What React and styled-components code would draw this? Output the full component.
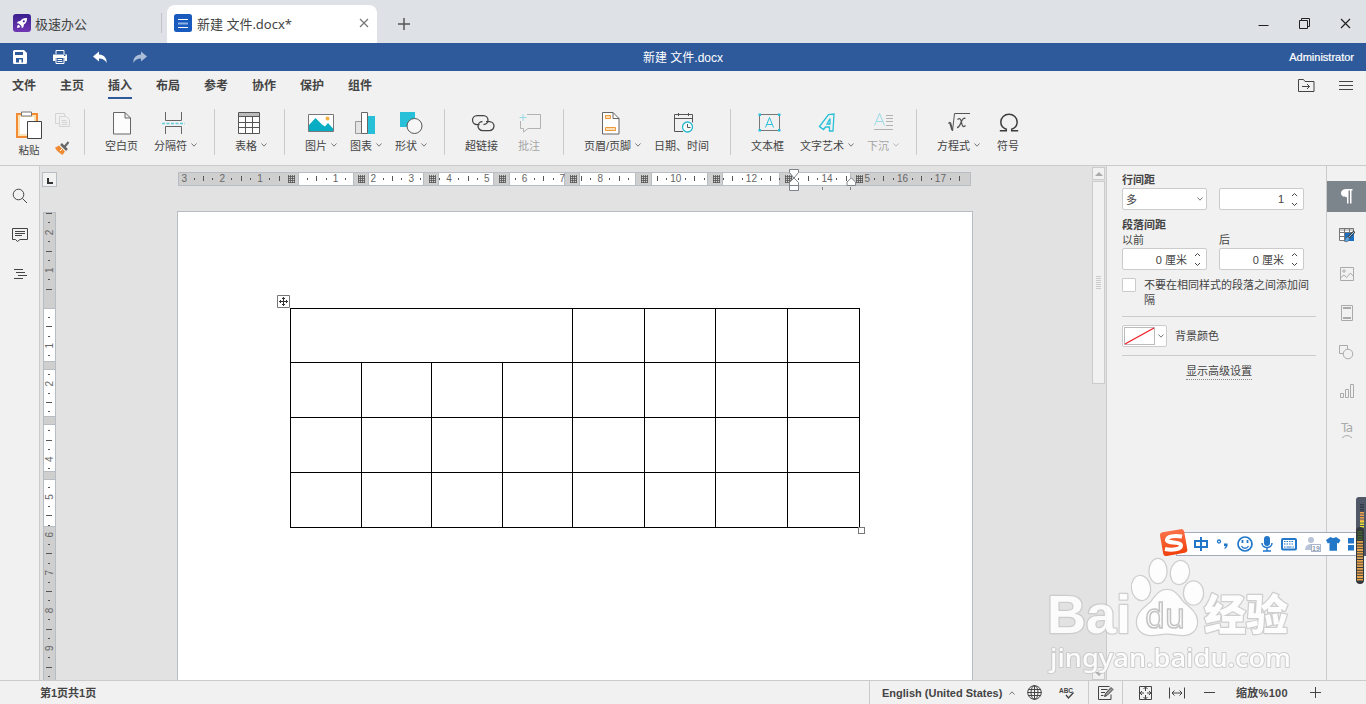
import React from "react";
import styled, {createGlobalStyle, css} from "styled-components";

const GlobalStyle = createGlobalStyle`
  * {
    box-sizing: border-box;
  }
  body {
    margin: 0;
    overflow: hidden;
    color: #444;
    font-family: "Liberation Sans", "Noto Sans CJK SC", sans-serif;
    font-size: 11px;
  }
  svg {
    display: block;
    flex: none;
  }
`;

const Window = styled.div`
  display: flex;
  flex-direction: column;
  width: 1366px;
  height: 704px;
  background: #f1f1f1;
`;

/* ---------- tabs ---------- */

const TabBar = styled.div`
  display: flex;
  height: 43px;
  background: #dee1e6;
  font-family: "Noto Sans", "Noto Sans CJK SC", sans-serif;
  font-size: 13px;
`;

const HomeTab = styled.div`
  display: flex;
  align-items: center;
  gap: 4px;
  width: 162px;
  height: 20px;
  margin: 13px 5px 0 0;
  padding-left: 13px;
  border-right: 1px solid #c0c3c8;
`;

const FileTab = styled.div`
  display: flex;
  align-items: center;
  width: 210px;
  height: 38px;
  margin-top: 5px;
  padding: 0 8px 2px 7px;
  border-radius: 8px 8px 0 0;
  background: white;
`;

const FileName = styled.span`
  flex: 1;
  padding-left: 5px;
  white-space: nowrap;
`;

const NewTab = styled.div`
  flex: 1;
  padding: 18px 0 0 21px;
`;

const WindowButtons = styled.div`
  display: flex;
  gap: 30px;
  padding: 18px 15px 0 0;
`;

/* ---------- title bar ---------- */

const TitleBar = styled.div`
  display: grid;
  grid-template-columns: 1fr auto 1fr;
  align-items: center;
  height: 28px;
  padding: 0 12px;
  background: #2e5a9c;
  color: white;
`;

const QuickActions = styled.div`
  display: flex;
  gap: 24px;
`;

const Title = styled.div`
  padding-bottom: 2px;
  font-size: 12px;
`;

const User = styled.div`
  text-align: right;
  font-size: 11px;
  -webkit-text-stroke: 0.2px white;
`;

/* ---------- menu ---------- */

const Menu = styled.div`
  display: flex;
  height: 28px;
  padding-right: 12px;
`;

const MenuItem = styled.div`
  margin: 0 12px;
  height: 28px;
  line-height: 30px;
  font-size: 12px;
  font-weight: 600;
  color: #444;
  border-bottom: 2px solid ${p => (p.$active ? "#2e5a9c" : "transparent")};
`;

const MenuIcons = styled.div`
  display: flex;
  gap: 23px;
  margin-left: auto;
  padding-top: 7px;
`;

/* ---------- toolbar ---------- */

const Toolbar = styled.div`
  display: flex;
  height: 67px;
  padding: 10px 0 0 15px;
  border-bottom: 1px solid #cbcbcb;
`;

const Tool = styled.div`
  width: ${p => p.$width}px;
  margin-left: ${p => p.$gap}px;
  opacity: ${p => (p.$disabled ? 0.45 : 1)};
`;

const ToolIcon = styled.div`
  display: flex;
  justify-content: center;
  height: 27px;
  padding: 3px ${p => p.$right || 0}px 0 ${p => p.$left || 0}px;
`;

const ToolLabel = styled.div`
  display: flex;
  align-items: center;
  gap: 4px;
  height: 18px;
  white-space: nowrap;
`;

const Divider = styled.div`
  width: 1px;
  height: 46px;
  margin-left: ${p => p.$gap}px;
  background: #cbcbcb;
`;

const Paste = styled.div`
  width: 28px;
  padding-top: 2px;
  text-align: center;
  line-height: 22px;
  font-size: 10.5px;
`;

const Clipboard = styled.div`
  display: flex;
  flex-direction: column;
  gap: 12px;
  width: 16px;
  margin-left: 12px;
  padding-top: 4px;
`;

/* ---------- workspace ---------- */

const Workspace = styled.div`
  display: flex;
  height: 514px;
`;

const LeftRail = styled.div`
  display: flex;
  flex-direction: column;
  align-items: center;
  gap: 23px;
  width: 40px;
  padding-top: 22px;
  border-right: 1px solid #cbcbcb;
`;

const Canvas = styled.div`
  display: flex;
  flex: 1;
  overflow: hidden;
  background: #e2e2e2;
`;

const RulerColumn = styled.div`
  width: 137px;
  padding: 6px 0 0 2px;
`;

const TabStop = styled.div`
  width: 15px;
  height: 15px;
  margin-bottom: 25px;
  padding: 5px 0 0 4px;
  border: 1px solid #b8bcc3;
  background: #f1f1f1;

  &::after {
    content: "";
    display: block;
    width: 4px;
    height: 4px;
    border-left: 2px solid #333;
    border-bottom: 2px solid #333;
  }
`;

const Main = styled.div`
  flex: 1;
  padding-top: 2px;
`;

const Page = styled.div`
  position: relative;
  width: 796px;
  height: 520px;
  margin-top: 19px;
  padding: 96px 0 0 112px;
  border: 1px solid #b8bcc3;
  background: white;
`;

const Table = styled.div`
  display: grid;
  grid-template-columns: 71px 70px 71px 70px 72px 71px 72px 72px;
  grid-template-rows: 54px 55px 55px 55px;
  width: 570px;
  border-top: 1px solid black;
  border-left: 1px solid black;
`;

const Cell = styled.div`
  grid-column: span ${p => p.$span || 1};
  border-right: 1px solid black;
  border-bottom: 1px solid black;
`;

const MoveHandle = styled.div`
  position: absolute;
  left: 99px;
  top: 83px;
`;

const ResizeHandle = styled.div`
  position: absolute;
  left: 680px;
  top: 315px;
  width: 7px;
  height: 7px;
  border: 1px solid #777;
  background: white;
`;

const ScrollBar = styled.div`
  display: flex;
  flex-direction: column;
  width: 14px;
  padding: 1px 1px 0 0;
`;

const ScrollButton = styled.div`
  display: flex;
  align-items: center;
  justify-content: center;
  height: 13px;
  border: 1px solid #cbcbcb;
  background: #f1f1f1;
`;

const Thumb = styled.div`
  display: flex;
  align-items: center;
  justify-content: center;
  height: 203px;
  margin: 1px 0 283px;
  border: 1px solid #cbcbcb;
  background: #f1f1f1;
`;

/* ---------- right panel ---------- */

const Panel = styled.div`
  width: 220px;
  padding: 7px 10px 0 15px;
  border-left: 1px solid #cbcbcb;
`;

const PanelLabel = styled.div`
  height: 15px;
  line-height: 15px;
  font-weight: ${p => (p.$bold ? 600 : 400)};
`;

const SpacingLabel = styled(PanelLabel)`
  margin-top: 8px;
`;

const Columns = styled.div`
  display: grid;
  grid-template-columns: 85px 85px;
  column-gap: 12px;
`;

const Field = styled.div`
  display: flex;
  align-items: center;
  justify-content: ${p => (p.$number ? "flex-end" : "space-between")};
  gap: 7px;
  height: 22px;
  padding: 0 ${p => (p.$number ? 5 : 3)}px 0 3px;
  border: 1px solid #cbcbcb;
  border-radius: 2px;
  background: white;
`;

const CheckRow = styled.div`
  display: flex;
  gap: 8px;
  width: 190px;
  height: 38px;
  margin-top: 8px;
  line-height: 15px;
`;

const CheckBox = styled.div`
  flex: none;
  width: 14px;
  height: 14px;
  border: 1px solid #cbcbcb;
  border-radius: 1px;
  background: white;
`;

const PanelLine = styled.div`
  height: 1px;
  background: #cbcbcb;
`;

const ColorRow = styled.div`
  display: flex;
  gap: 8px;
  height: 38px;
  padding-top: 8px;
  line-height: 22px;
`;

const ColorButton = styled.div`
  display: flex;
  align-items: center;
  gap: 3px;
  width: 45px;
  height: 22px;
  padding-left: 1px;
  border: 1px solid #cbcbcb;
  border-radius: 2px;
  background: white;
`;

const Advanced = styled.div`
  width: 66px;
  height: 17px;
  margin: 7px auto 0;
  line-height: 17px;
  border-bottom: 1px dotted #888;
`;

const RightRail = styled.div`
  width: 40px;
  padding-top: 15px;
  border-left: 1px solid #cbcbcb;
`;

const RailItem = styled.div`
  display: flex;
  align-items: center;
  justify-content: center;
  height: 31px;
  margin-bottom: 8px;
  padding-bottom: 1px;
  ${p =>
    p.$active &&
    css`
      background: #7d858c;
    `}
`;

/* ---------- status bar ---------- */

const StatusBar = styled.div`
  display: flex;
  align-items: center;
  height: 24px;
  border-top: 1px solid #cbcbcb;
  font-weight: bold;
`;

const PageCount = styled.div`
  width: 869px;
  padding: 0 0 2px 40px;
`;

const StatusGroup = styled.div`
  display: flex;
  align-items: center;
  height: 23px;
  width: ${p => p.$width}px;
  padding-left: ${p => p.$pad}px;
  border-left: 1px solid #cbcbcb;
`;

const Language = styled.span`
  width: 127px;
  white-space: nowrap;
`;

const Zoom = styled.span`
  width: 52px;
  padding-bottom: 2px;
  letter-spacing: 0.3px;
  white-space: nowrap;
`;

const Spacer = styled.div`
  width: ${p => p.$width}px;
`;

/* ---------- floating things ---------- */

const ImeBar = styled.div`
  position: fixed;
  left: 1176px;
  top: 532px;
  display: flex;
  align-items: center;
  width: 190px;
  height: 24px;
  border: 1px solid #a5abba;
  border-right: 0;
  background: white;
`;

const ImeLogo = styled.div`
  position: fixed;
  left: 1159px;
  top: 528px;
`;

const Meter = styled.div`
  position: fixed;
  right: 0;
  top: 497px;
`;

const Watermark = styled.div`
  position: fixed;
  left: 1040px;
  top: 550px;
  opacity: 0.85;
`;

/* ---------- icons ---------- */

const Icon = ({w, h, children, color = "#444", vb}) => (
  <svg
    width={w}
    height={h}
    viewBox={vb || `0 0 ${w} ${h}`}
    fill="none"
    stroke={color}
  >
    {children}
  </svg>
);

const Chevron = ({up}) => (
  <Icon w={6} h={4} color="#777">
    <path d={up ? "M.5 3.500 3 .8l2.500 2.700" : "M.5.5 3 3.200 5.500.5"} />
  </Icon>
);

const Spinner = () => (
  <Icon w={7} h={15}>
    <path d="M1 4 3.500 1.500 6 4M1 11l2.500 2.500L6 11" />
  </Icon>
);

const RocketLogo = () => (
  <svg width="18" height="18">
    <defs>
      <linearGradient id="rocket" x1="0" y1="0" x2="0" y2="1">
        <stop offset="0" stopColor="#3a1f8e" />
        <stop offset="1" stopColor="#7137b4" />
      </linearGradient>
    </defs>
    <rect width="18" height="18" rx="3" fill="url(#rocket)" />
    <path
      d="M14 4c-3.200-.2-5.300.9-6.700 3L5 7.400 3.800 9.300l2 .1 2.700 2.700.2 2.100 1.800-1.300.4-2.300C13 9.200 14.200 7.200 14 4zM4 14l.4-2.500 1-.8 1.900 1.900-.9 1z"
      fill="white"
    />
    <circle cx="10.800" cy="7.300" r="1.100" fill="#52299c" />
  </svg>
);

const DocLogo = () => (
  <svg width="18" height="18">
    <rect width="18" height="18" rx="2.500" fill="#185abd" />
    <path d="M4 5.500h10M4 13.500h10" stroke="white" />
    <path d="M4 9.500h10" stroke="#8eb2e4" strokeWidth="2" />
  </svg>
);

const SaveIcon = () => (
  <Icon w={16} h={16}>
    <path
      d="M2.500 1h9.500L15 4v9.500a1.500 1.500 0 0 1-1.500 1.500h-11A1.500 1.500 0 0 1 1 13.500v-11A1.500 1.500 0 0 1 2.500 1zM3 3v3h8V3zM4 9v4.500h7V9zm3 1.500h2.500v3H7z"
      fill="white"
      stroke="none"
      fillRule="evenodd"
    />
  </Icon>
);

const PrintIcon = () => (
  <Icon w={16} h={16} color="white">
    <path d="M4 5V1.500h8V5" />
    <path d="M1 5.500h14V12h-2.500V9h-9v3H1z" fill="white" stroke="none" />
    <path d="M4 8.500h8v6H4zM5.500 10.500H10M5.500 12.500h5" />
    <path d="M12 6.500h1.500" stroke="#2e5a9c" />
  </Icon>
);

const UndoIcon = ({redo}) => (
  <Icon w={16} h={16}>
    <path
      d="M1 7.500 7 2.500v3c5 .3 8 3.500 7.600 8.500C13.200 11 11 9.500 7 9.500v3z"
      fill="white"
      stroke="none"
      opacity={redo ? 0.6 : 1}
      transform={redo ? "matrix(-1 0 0 1 16 0)" : undefined}
    />
  </Icon>
);

const PasteIcon = () => (
  <svg width="28" height="28" fill="none">
    <path d="M2 3h20v23H2z" fill="#fff" stroke="#f28b33" strokeWidth="2" />
    <path d="M4 5h16v19H4z" stroke="#fbe3b5" strokeWidth="2" />
    <path d="M6.500 1h10v4h-10z" fill="#fff" stroke="#777" />
    <path d="M12.500 10.500h14v17h-14z" fill="#fff" stroke="#444" />
  </svg>
);

const CopyIcon = () => (
  <Icon w={15} h={16} color="#d4d4d4">
    <path d="M4.500 10.500H.500v-10h9v3M4.500 3.500h7l3 3v7h-10z" />
    <path d="M6.500 7.500h5M6.500 9.500h6M6.500 11.500h6" />
  </Icon>
);

const BrushIcon = () => (
  <Icon w={15} h={14}>
    <path d="M9 6.500 13.500 1" stroke="#666" strokeWidth="2" />
    <path d="m6 3 6 6" stroke="#666" strokeWidth="2.500" />
    <path d="m4 4.500 6 6L7.500 14C4 12 1 9 0 6.800z" fill="#f08a33" stroke="none" />
    <path d="m5 10 2-2" stroke="#fff" />
  </Icon>
);

const BlankIcon = () => (
  <Icon w={18} h={24} color="#666">
    <path d="M.5.5h11.500l5.500 5.500v16H.5zM12 .5V6h5.500" fill="#fcfcfc" />
  </Icon>
);

const BreakIcon = () => (
  <Icon w={24} h={24} color="#666">
    <path d="M3.500 0v8.500h16V0M3.500 22v-7.500h16V22" />
    <path d="M0 11.500h23" stroke="#5fcfdd" strokeDasharray="3 1.500" strokeWidth="1.500" />
  </Icon>
);

const TableIcon = () => (
  <Icon w={22} h={24} color="#555">
    <path d="M.5.5h21v21H.5z" fill="#fff" />
    <path d="M1 1h20v3H1z" fill="#bbb" stroke="none" />
    <path d="M.5 4.500h21M.5 10.500h21M.5 15.500h21M7.500 4v17.500M14.500 4v17.500" />
  </Icon>
);

const PictureIcon = () => (
  <Icon w={26} h={24} color="#777">
    <path d="M.5 2.500h25v17H.5z" fill="#fff" />
    <path d="M1 13 7.500 6l6.500 6.500 3 2 3-3.500 5 5.500V19H1z" fill="#08adc4" stroke="none" />
    <circle cx="19.500" cy="6.500" r="2" fill="#f6b044" stroke="none" />
  </Icon>
);

const ChartIcon = () => (
  <Icon w={21} h={24} color="#666">
    <path d="M.5 9.500h6v12h-6z" fill="#e4e4e4" stroke="#999" />
    <path d="M12 4h8v18h-8z" fill="#28c0d8" stroke="none" />
    <path d="M6.500.5h6v21h-6z" fill="#fff" />
  </Icon>
);

const ShapesIcon = () => (
  <Icon w={23} h={24} color="#555">
    <path d="M0 0h15v15H0z" fill="#28c0d8" stroke="none" />
    <circle cx="14.500" cy="14" r="7.500" fill="#f6f6f6" />
  </Icon>
);

const LinkIcon = () => (
  <Icon w={24} h={24}>
    <path
      d="M8.500 12.600H6A4.500 4.500 0 0 1 6 3.600h6.500a4.500 4.500 0 0 1 4.500 4.500c0 2.600-2 4.500-4.500 4.500"
      strokeWidth="1.300"
    />
    <path
      d="M15 9.600h3.500a4.500 4.500 0 0 1 0 9H11.500a4.500 4.500 0 0 1-4.500-4.500c0-2.600 2-4.500 4.500-4.500"
      strokeWidth="1.300"
    />
  </Icon>
);

const CommentToolIcon = () => (
  <Icon w={22} h={24} color="#666">
    <path d="M8 2.500h13.500v14H9L4.500 20v-3.500H1.500V9" />
    <path d="M4 2v7M.5 5.500h7" stroke="#28c0d8" />
  </Icon>
);

const HeaderIcon = () => (
  <Icon w={18} h={24} color="#666">
    <path d="M.5.5h10.500l6 6v15.500H.5z" fill="#fff" />
    <path d="M11 .5v6h6" />
    <path d="M3.500 3.500h5v3h-5zM3.500 15.500h10v3h-10z" fill="#fde1b6" stroke="#f0963c" />
  </Icon>
);

const DateIcon = () => (
  <Icon w={20} h={24} color="#555">
    <path d="M9 19.500H.5v-17h18v8M.5 6.500h18M4.500 1v3M14.500 1v3" />
    <circle cx="13.500" cy="15" r="5" fill="#f8fdfe" stroke="#28b8d0" strokeWidth="1.300" />
    <path d="M13.500 12v3.500h3" />
  </Icon>
);

const TextBoxIcon = () => (
  <Icon w={23} h={24} color="#777">
    <path d="M1.500 2.500h20v16h-20z" />
    <path d="m7.500 15.500 4-10 4 10M9 12.500h5" stroke="#28c0d8" />
    <path
      d="M.5 1.500h2.500v2.500H.5zM20 1.500h2.500v2.500H20zM.5 17h2.500v2.500H.5zM20 17h2.500v2.500H20z"
      fill="#28c0d8"
      stroke="none"
    />
  </Icon>
);

const WordArtIcon = () => (
  <Icon w={18} h={24} color="#28c0d8">
    <path d="M1.500 14.500 10.500 2.500 16 2l-1 17h-3.500v-4H7.500l-2 2.500zM12 6.500l-3 5.500h3z" strokeWidth="1.300" />
  </Icon>
);

const DropCapIcon = () => (
  <Icon w={20} h={24} color="#666">
    <path d="m.5 13.500 5-12 5 12M2.500 9.500h6" stroke="#28c0d8" />
    <path d="M12 3.500h7M12 6.500h7M12 9.500h7M12 13.500h7M0 17.500h19" />
  </Icon>
);

const FormulaIcon = () => (
  <Icon w={22} h={24} color="#555">
    <path d="M0 11.500 2 10l2.500 9L6.500 1.500H22" />
    <path d="M2 10.500 4.300 18" strokeWidth="2" />
    <path
      d="M9.500 7.500c2.500-2 3.500 0 4 3s1.500 5.500 4 3M17.500 6.500c-2-1-3 .8-4.300 3.500s-2 5.800-4.200 5.500"
      strokeWidth="1.300"
    />
  </Icon>
);

const OmegaIcon = () => (
  <Icon w={20} h={24} color="#3c3c3c">
    <path
      d="M.8 18.800h6.500v-1.500C4 16 1.800 13.500 1.800 10a8.200 7.800 0 0 1 16.400 0c0 3.500-2.200 6-5.500 7.300v1.500h6.500"
      strokeWidth="1.500"
    />
  </Icon>
);

/* ---------- rulers ---------- */

const UNIT = 37.8;

const H_SEGMENTS = [
  [299, 354],
  [369, 424],
  [439, 494],
  [510, 565],
  [580, 636],
  [652, 708],
  [723, 780],
  [795, 851],
];
const H_MARKS = [291, 361, 432, 502, 573, 644, 716, 788, 859];
const V_SEGMENTS = [
  [309, 362],
  [370, 417],
  [425, 472],
  [480, 527],
];

const quarters = (from, to) => {
  const list = [];
  for (let q = from * 4; q <= to * 4; q++) {
    list.push(q / 4);
  }
  return list;
};

const isVisible = (pos, segments) => {
  const first = segments[0][0];
  const last = segments[segments.length - 1][1];
  return (
    pos < first - 1 ||
    pos > last + 1 ||
    segments.some(([a, b]) => pos >= a - 1 && pos <= b + 0.5)
  );
};

const HorizontalRuler = () => (
  <svg width="796" height="24" viewBox="177 168 796 24">
    <rect x="178.500" y="172.500" width="792" height="13" fill="#cfcfcf" stroke="#b8bcc3" />
    {H_SEGMENTS.map(([a, b]) => (
      <rect key={a} x={a - 0.5} y="172.500" width={b - a} height="13" fill="white" stroke="#b8bcc3" />
    ))}
    {quarters(-3, 17.5).map(n => {
      const x = 298 + n * UNIT;
      if (n === 0 || !isVisible(x, H_SEGMENTS) || n === -0.25 || n === 15) {
        return null;
      }
      if (Number.isInteger(n)) {
        return (
          <text key={n} x={x - 0.2} y="182" fontSize="10" fill="#666" textAnchor="middle">
            {Math.abs(n)}
          </text>
        );
      }
      const half = Math.abs(n % 1) === 0.5;
      return (
        <rect key={n} x={Math.floor(x)} y={half ? 176 : 178} width="1" height={half ? 5 : 2} fill="#555" />
      );
    })}
    <text x="864.500" y="182" fontSize="10" fill="#666">5</text>
    {H_MARKS.map(x => (
      <g key={x}>
        <rect x={x - 4} y="175" width="9" height="8" fill="#cfcfcf" />
        <path
          d={`M${x - 2.5} 175v8m2-8v8m2-8v8m2-8v8M${x - 3} 176.500h7m-7 2h7m-7 2h7m-7 2h7`}
          stroke="#555"
          strokeWidth="0.800"
        />
      </g>
    ))}
    <g fill="white" stroke="#7d858c">
      <path d="M789.500 169.500h9v3l-4.500 5.500-4.500-5.500zM789.500 185.500v-3l4.500-4.500 4.500 4.500v3zM789.500 185.500h9v5h-9z" />
      <path d="M847 185.500v-3.500l4.300-4 4.300 4v3.500z" />
      <path d="M822.500 187v3M850.500 187v3" />
    </g>
  </svg>
);

const VerticalRuler = () => (
  <svg width="15" height="470" viewBox="42 212 15 470">
    <rect x="43.500" y="212.500" width="12" height="480" fill="#cfcfcf" stroke="#b8bcc3" />
    {V_SEGMENTS.map(([a, b]) => (
      <rect key={a} x="43.500" y={a - 0.5} width="12" height={b - a} fill="white" stroke="#b8bcc3" />
    ))}
    {quarters(-2.5, 9.75).map(n => {
      const y = 308 + n * UNIT;
      if (n === 0 || !isVisible(y, V_SEGMENTS) || n === -0.25) {
        return null;
      }
      if (Number.isInteger(n)) {
        return (
          <text
            key={n}
            transform={`translate(53 ${y}) rotate(-90)`}
            fontSize="10"
            fill="#666"
            textAnchor="middle"
          >
            {Math.abs(n)}
          </text>
        );
      }
      const half = Math.abs(n % 1) === 0.5;
      return (
        <rect key={n} x={half ? 46 : 48} y={Math.floor(y)} width={half ? 6 : 2} height="1" fill="#555" />
      );
    })}
  </svg>
);

/* ---------- parts ---------- */

const TOOLS = [
  {label: "空白页", width: 33, gap: 20, icon: <BlankIcon />},
  {label: "分隔符", width: 43, gap: 16, icon: <BreakIcon />, right: 4, arrow: true},
  {divider: 17},
  {label: "表格", width: 32, gap: 20, icon: <TableIcon />, right: 4, arrow: true},
  {divider: 17},
  {label: "图片", width: 32, gap: 20, icon: <PictureIcon />, right: 1, arrow: true},
  {label: "图表", width: 32, gap: 13, icon: <ChartIcon />, right: 1, arrow: true},
  {label: "形状", width: 32, gap: 13, icon: <ShapesIcon />, arrow: true},
  {divider: 17},
  {label: "超链接", width: 33, gap: 20, icon: <LinkIcon />, left: 3},
  {label: "批注", width: 22, gap: 20, icon: <CommentToolIcon />, left: 2, disabled: true},
  {divider: 23},
  {label: "页眉/页脚", width: 58, gap: 20, icon: <HeaderIcon />, right: 4, arrow: true},
  {label: "日期、时间", width: 55, gap: 12, icon: <DateIcon />, left: 4},
  {divider: 21},
  {label: "文本框", width: 33, gap: 20, icon: <TextBoxIcon />, left: 4},
  {label: "文字艺术", width: 54, gap: 16, icon: <WordArtIcon />, arrow: true},
  {label: "下沉", width: 32, gap: 13, icon: <DropCapIcon />, left: 2, arrow: true, disabled: true},
  {divider: 17},
  {label: "方程式", width: 43, gap: 20, icon: <FormulaIcon />, arrow: true},
  {label: "符号", width: 22, gap: 17, icon: <OmegaIcon />, left: 2},
];

const ToolbarRow = () => (
  <Toolbar>
    <Paste>
      <PasteIcon />
      粘贴
    </Paste>
    <Clipboard>
      <CopyIcon />
      <BrushIcon />
    </Clipboard>
    <Divider $gap={13} />
    {TOOLS.map((tool, i) =>
      tool.divider ? (
        <Divider key={i} $gap={tool.divider} />
      ) : (
        <Tool key={i} $width={tool.width} $gap={tool.gap} $disabled={tool.disabled}>
          <ToolIcon $left={tool.left} $right={tool.right}>
            {tool.icon}
          </ToolIcon>
          <ToolLabel>
            {tool.label}
            {tool.arrow && <Chevron />}
          </ToolLabel>
        </Tool>
      )
    )}
  </Toolbar>
);

const SettingsPanel = () => (
  <Panel>
    <PanelLabel $bold>行间距</PanelLabel>
    <Columns>
      <Field>
        多
        <Chevron />
      </Field>
      <Field $number>
        1
        <Spinner />
      </Field>
    </Columns>
    <SpacingLabel $bold>段落间距</SpacingLabel>
    <Columns>
      <PanelLabel>以前</PanelLabel>
      <PanelLabel>后</PanelLabel>
      <Field $number>
        0 厘米
        <Spinner />
      </Field>
      <Field $number>
        0 厘米
        <Spinner />
      </Field>
    </Columns>
    <CheckRow>
      <CheckBox />
      <span>不要在相同样式的段落之间添加间隔</span>
    </CheckRow>
    <PanelLine />
    <ColorRow>
      <ColorButton>
        <svg width="31" height="18">
          <rect x=".5" y=".5" width="30" height="17" fill="white" stroke="#bbb" />
          <path d="M1 17 30 1" stroke="#f0202a" strokeWidth="1.400" />
        </svg>
        <Chevron />
      </ColorButton>
      背景颜色
    </ColorRow>
    <PanelLine />
    <Advanced>显示高级设置</Advanced>
  </Panel>
);

const SideIcons = () => (
  <RightRail>
    <RailItem $active>
      <Icon w={14} h={16}>
        <path
          d="M6.500 1H12.500v1.500h-1V15.500H10V2.500H8.500v13H7V9.300C3 9.300 1 7.500 1 5.100S3 1 6.500 1z"
          fill="white"
          stroke="none"
        />
      </Icon>
    </RailItem>
    <RailItem>
      <Icon w={16} h={16} color="#777">
        <path d="M.5 1.500h14v12H.5z" fill="#fff" />
        <path d="M1 1h13v3H1z" fill="#ccc" stroke="none" />
        <path d="M5 6h10v8H5z" fill="#1a6fc4" stroke="none" />
        <path d="M.5 5.500h14M.5 9.500h5M5.500 1.500v12M10.500 1.500v4M.500 1.500h14" />
        <path d="m15.500 4.500-6 6" stroke="#444" strokeWidth="2.500" />
        <path d="m15 5-5 5" stroke="#8cc3f0" />
        <path d="M9 9.500c-2 0-2 3-4 4.500 3 1.500 5 .5 5.500-2.500z" fill="#5aa5e4" stroke="#555" strokeWidth=".6" />
      </Icon>
    </RailItem>
    <RailItem>
      <Icon w={14} h={14} color="#aaa">
        <path d="M.5.5h13v13H.5zM1 10.500 4 8l2.500 2.500 4-4.500 3 3.500" />
        <circle cx="4" cy="4" r="1.200" />
      </Icon>
    </RailItem>
    <RailItem>
      <Icon w={12} h={16} color="#aaa">
        <path d="M.5.500h11v15H.5z" />
        <path d="M2 3h8M2 13h8" strokeWidth="2" />
      </Icon>
    </RailItem>
    <RailItem>
      <Icon w={15} h={15} color="#aaa">
        <path d="M4 8.500H.5v-8h8V4" />
        <circle cx="9" cy="9" r="4.800" />
      </Icon>
    </RailItem>
    <RailItem>
      <Icon w={14} h={14} color="#aaa">
        <path d="M.5 9.500h3v4h-3zM5.500 5.500h3v8h-3zM10.500.5h3v13h-3z" />
      </Icon>
    </RailItem>
    <RailItem>
      <svg width="18" height="30">
        <text x="3" y="16.500" fontSize="13" fill="#aaa" fontFamily="Noto Sans" textLength="12">
          Ta
        </text>
        <path d="M4 23q5-5 10 0" fill="none" stroke="#aaa" />
      </svg>
    </RailItem>
  </RightRail>
);

const Status = () => (
  <StatusBar>
    <PageCount>第1页共1页</PageCount>
    <StatusGroup $width={219} $pad={12}>
      <Language>English (United States)</Language>
      <Chevron up />
      <Spacer $width={12} />
      <Icon w={15} h={15}>
        <circle cx="7.500" cy="7.500" r="6.800" />
        <ellipse cx="7.500" cy="7.500" rx="3.500" ry="6.800" />
        <path d="M7.500.5v14M.5 7.500h14M1.500 4.500h12M1.500 10.500h12" />
      </Icon>
      <Spacer $width={17} />
      <svg width="16" height="16">
        <text
          x="0"
          y="7.500"
          fontSize="7.500"
          fontWeight="bold"
          fill="#444"
          textLength="14"
          lengthAdjust="spacingAndGlyphs"
        >
          ABC
        </text>
        <path d="m7 10 2.500 3 5-5.500" fill="none" stroke="#444" strokeWidth="1.400" />
      </svg>
    </StatusGroup>
    <StatusGroup $width={34} $pad={9}>
      <Icon w={16} h={16}>
        <path d="M13 9.500v5H.5V1.500h11M3 4.500h6.500M3 7.500h4M3 10.500h2.500" />
        <path d="m6.500 11.500 1-3L13 2.500l2 2-6 6z" fill="#999" />
      </Icon>
    </StatusGroup>
    <StatusGroup $width={244} $pad={16}>
      <Icon w={14} h={16}>
        <path d="M.5 1.500h12v13H.5z" />
        <path d="M6.500 1.500V6M6.500 10v4.500M.5 8H5M8 8h4.500M4.500 4l2-2 2 2M4.500 12l2 2 2-2M3 6 1 8l2 2M10 6l2 2-2 2" />
      </Icon>
      <Spacer $width={16} />
      <Icon w={17} h={12}>
        <path d="M.5.5v11M15.500.5v11M3 6h10M5.500 3.500 3 6l2.500 2.500M10.500 3.500 13 6l-2.500 2.500" />
      </Icon>
      <Spacer $width={18} />
      <Icon w={11} h={11}>
        <path d="M0 5.500h11" />
      </Icon>
      <Spacer $width={21} />
      <Zoom>缩放%100</Zoom>
      <Spacer $width={22} />
      <Icon w={11} h={11}>
        <path d="M0 5.500h11M5.500 0v11" />
      </Icon>
    </StatusGroup>
  </StatusBar>
);

const InputMethod = () => (
  <>
    <ImeBar>
      <svg width="189" height="22" viewBox="1177 533 189 22" fill="none" stroke="#2277c9" strokeWidth="2">
        <path d="M1195 541h12v6h-12zM1201 537v14" />
        <circle cx="1219" cy="541.500" r="1.500" strokeWidth="1.300" />
        <path
          d="M1224 543.500h3.500c.6 2.500-.5 4.500-2.800 5.500l-.4-1c1-.6 1.300-1.200 1.200-2h-1.500z"
          fill="#2277c9"
          stroke="none"
        />
        <circle cx="1245" cy="544" r="7" strokeWidth="1.700" />
        <path d="M1241.500 546c1.500 3 5.500 3 7 0" strokeWidth="1.300" />
        <path d="M1242.500 540v3M1247.500 540v3" strokeWidth="1.800" />
        <rect x="1264" y="536" width="6" height="10" rx="3" fill="#2277c9" stroke="none" />
        <path d="M1262 543c0 6 10 6 10 0M1267 547v3.500M1263 551h8" strokeWidth="1.500" />
        <rect x="1282" y="539" width="14" height="10.500" rx="1" />
        <path d="M1284 541.500h10M1284 544h10" strokeWidth="1.200" strokeDasharray="1.500 1" />
        <path d="M1284 547h1.500M1286.500 547h5M1292.500 547h1.500" strokeWidth="1.200" />
        <circle cx="1311" cy="540" r="3" fill="#b9c4d9" stroke="none" />
        <path d="M1305 550c0-8 12-8 12 0z" fill="#b9c4d9" stroke="none" />
        <rect x="1311.500" y="544.500" width="9" height="7" fill="#fff" stroke="#a9b5ca" strokeWidth="1" />
        <text x="1312" y="550.800" fontSize="7" fontWeight="bold" fill="#8e9cb5" stroke="none">
          19
        </text>
        <path
          d="m1330.500 537-4.500 3 1.800 3.500 1.700-.8v8h7.500v-8l1.700.8 1.800-3.500-4.500-3q-2.700 2-5.500 0z"
          fill="#2277c9"
          stroke="none"
        />
        <path d="M1348 538h6v5.500h-6zM1348 545h6v5.500h-6z" fill="#2277c9" stroke="none" />
      </svg>
    </ImeBar>
    <ImeLogo>
      <svg width="30" height="30">
        <defs>
          <linearGradient id="ime" x1="0" y1="0" x2="0" y2="1">
            <stop offset="0" stopColor="#fb7148" />
            <stop offset="1" stopColor="#f0410c" />
          </linearGradient>
        </defs>
        <rect x="2.500" y="2.500" width="24.500" height="24" rx="3" fill="url(#ime)" transform="rotate(-10 15 15)" />
        <path
          d="M23 8.500C15 7 8 8.500 8 12s14 1.500 14 5.500c0 4-9 5-16 3.500"
          fill="none"
          stroke="white"
          strokeWidth="4"
        />
      </svg>
    </ImeLogo>
    <Meter>
      <svg width="11" height="88">
        <rect x="1" y="0" width="14" height="59" rx="3" fill="#505766" />
        <path d="M7 7v8" stroke="#333a48" strokeWidth="4" strokeDasharray="1.500 1" />
        <path d="M7 15v10" stroke="#f0a24c" strokeWidth="4" strokeDasharray="1.500 1" />
        <path d="M7 24v7" stroke="#e8dd32" strokeWidth="4" strokeDasharray="1.500 1" />
        <rect x="1" y="30" width="8" height="57" rx="4" fill="#33383c" />
        <path d="M5 34v10" stroke="#45602c" strokeWidth="5" strokeDasharray="1.500 1" />
        <path d="M5 44v40" stroke="#e4a24d" strokeWidth="6" strokeDasharray="1.800 .9" />
      </svg>
    </Meter>
  </>
);

const Brand = () => (
  <Watermark>
    <svg width="260" height="130" viewBox="1040 550 260 130">
      <g fill="white" stroke="#c8c8c8" strokeWidth="2.500" strokeLinejoin="round" paintOrder="stroke">
        <text x="1047" y="633" fontSize="54" fontWeight="bold" textLength="84" lengthAdjust="spacingAndGlyphs">
          Bai
        </text>
        <ellipse cx="1141" cy="588" rx="9" ry="12" transform="rotate(-8 1141 588)" />
        <ellipse cx="1158" cy="571" rx="8.500" ry="12" />
        <ellipse cx="1180" cy="572.500" rx="9" ry="11.500" transform="rotate(10 1180 572)" />
        <ellipse cx="1193.500" cy="593" rx="9.500" ry="11.500" />
        <path d="M1167 590c8 0 11 6 15 11s15 10 15 21c0 8-6 13-14 13-6 0-10-1.500-16-1.500s-10 1.500-16 1.500c-8 0-14-5-14-13 0-11 11-16 15-21s7-11 15-11z" />
        <text x="1204" y="630" fontSize="42" fontWeight="900" fontFamily="Noto Sans CJK SC">
          经验
        </text>
        <text
          x="1050"
          y="666.500"
          fontSize="26"
          fontWeight="500"
          fontFamily="Noto Sans"
          textLength="241"
          lengthAdjust="spacingAndGlyphs"
          strokeWidth="2"
        >
          jingyan.baidu.com
        </text>
      </g>
      <text
        x="1145"
        y="628"
        fontSize="34"
        fontFamily="Noto Sans"
        fill="white"
        stroke="#bbb"
        strokeWidth="1.600"
        textLength="40"
        lengthAdjust="spacingAndGlyphs"
      >
        du
      </text>
    </svg>
  </Watermark>
);

const MENU = ["文件", "主页", "插入", "布局", "参考", "协作", "保护", "组件"];

const App = () => (
  <Window>
    <GlobalStyle />
    <TabBar>
      <HomeTab>
        <RocketLogo />
        极速办公
      </HomeTab>
      <FileTab>
        <DocLogo />
        <FileName>新建 文件.docx*</FileName>
        <Icon w={10} h={10} color="#777">
          <path d="m1 1 8 8M9 1 1 9" strokeWidth="1.200" />
        </Icon>
      </FileTab>
      <NewTab>
        <Icon w={12} h={12} color="#555">
          <path d="M0 6h12M6 0v12" strokeWidth="1.500" />
        </Icon>
      </NewTab>
      <WindowButtons>
        <Icon w={11} h={11} color="#222">
          <path d="M.5 7.500h10" />
        </Icon>
        <Icon w={11} h={11} color="#222">
          <path d="M.5 2.500h8v8h-8zM2.500 2.500v-2h8v8h-2" />
        </Icon>
        <Icon w={11} h={11} color="#222">
          <path d="m1 1 9 9M10 1 1 10" strokeWidth="1.200" />
        </Icon>
      </WindowButtons>
    </TabBar>
    <TitleBar>
      <QuickActions>
        <SaveIcon />
        <PrintIcon />
        <UndoIcon />
        <UndoIcon redo />
      </QuickActions>
      <Title>新建 文件.docx</Title>
      <User>Administrator</User>
    </TitleBar>
    <Menu>
      {MENU.map(item => (
        <MenuItem key={item} $active={item === "插入"}>
          {item}
        </MenuItem>
      ))}
      <MenuIcons>
        <Icon w={17} h={15}>
          <path d="M.5 13.500v-12h5l1.500 2h9v10zM4 8.500h7.500M9 6l2.500 2.500L9 11" />
        </Icon>
        <Icon w={16} h={15}>
          <path d="M1 3.500h14M1 7.500h14M1 11.500h14" />
        </Icon>
      </MenuIcons>
    </Menu>
    <ToolbarRow />
    <Workspace>
      <LeftRail>
        <Icon w={16} h={16}>
          <circle cx="6.500" cy="6.500" r="5.300" />
          <path d="m10.500 10.500 4.500 4.500" />
        </Icon>
        <Icon w={16} h={16}>
          <path d="M.5 1.500h15v11H8l-2.500 2-2-2H.500z" />
          <path d="M3 4.500h10M3 6.500h10M3 8.500h7" />
        </Icon>
        <Icon w={16} h={16}>
          <path d="M2 3.500h9M4 6.500h9M6 9.500h9M2 12.500h9" />
        </Icon>
      </LeftRail>
      <Canvas>
        <RulerColumn>
          <TabStop />
          <VerticalRuler />
        </RulerColumn>
        <Main>
          <HorizontalRuler />
          <Page>
            <MoveHandle>
              <Icon w={13} h={13}>
                <path d="M.5.5h12v12H.5z" fill="#fff" stroke="#777" />
                <path d="M6.500 2v9M2 6.500h9M5 3.500h3M5 9.500h3M3.500 5v3M9.500 5v3" stroke="#333" />
              </Icon>
            </MoveHandle>
            <Table>
              <Cell $span={4} />
              {Array.from({length: 28}, (_, i) => (
                <Cell key={i} />
              ))}
            </Table>
            <ResizeHandle />
          </Page>
        </Main>
        <ScrollBar>
          <ScrollButton>
            <svg width="8" height="4">
              <path d="m0 4 4-4 4 4z" fill="#aaa" />
            </svg>
          </ScrollButton>
          <Thumb>
            <svg width="5" height="13">
              <path
                d="M0 .5h5M0 2.500h5M0 4.500h5M0 6.500h5M0 8.500h5M0 10.500h5M0 12.500h5"
                stroke="#cbcbcb"
              />
            </svg>
          </Thumb>
          <ScrollButton>
            <svg width="8" height="4">
              <path d="m0 0 4 4 4-4z" fill="#aaa" />
            </svg>
          </ScrollButton>
        </ScrollBar>
      </Canvas>
      <SettingsPanel />
      <SideIcons />
    </Workspace>
    <Status />
    <InputMethod />
    <Brand />
  </Window>
);

export default App;
